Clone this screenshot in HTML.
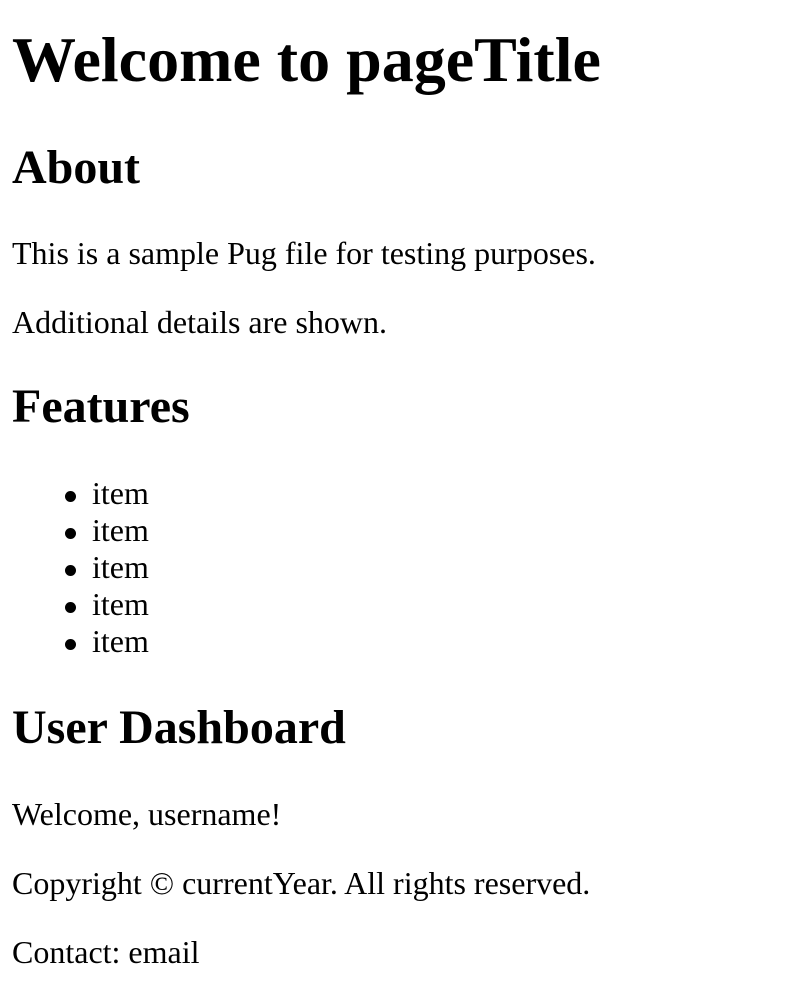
<!DOCTYPE html>
<html><head><meta charset="utf-8"><style>
html,body{margin:0;padding:0;background:#fff;width:812px;height:1008px;overflow:hidden}
body{font-family:"Liberation Serif","Times New Roman",serif;color:#000;position:relative}
.a{position:absolute;left:12px;margin:0;white-space:nowrap;line-height:1}
.h1{font-size:64px;font-weight:bold}
.h2{font-size:48px;font-weight:bold}
.p{font-size:32px}
.li{left:92px}
.li::before{content:"";position:absolute;left:-27px;top:14px;width:11px;height:11px;border-radius:50%;background:#000}
</style></head><body>
<h1 class="a h1" style="top:28px">Welcome to pageTitle</h1>
<h2 class="a h2" style="top:144px">About</h2>
<p class="a p" style="top:237px">This is a sample Pug file for testing purposes.</p>
<p class="a p" style="top:306px">Additional details are shown.</p>
<h2 class="a h2" style="top:383px">Features</h2>
<div class="a p li" style="top:477px">item</div>
<div class="a p li" style="top:514px">item</div>
<div class="a p li" style="top:551px">item</div>
<div class="a p li" style="top:588px">item</div>
<div class="a p li" style="top:625px">item</div>
<h2 class="a h2" style="top:704px">User Dashboard</h2>
<p class="a p" style="top:798px">Welcome, username!</p>
<p class="a p" style="top:867px">Copyright © currentYear. All rights reserved.</p>
<p class="a p" style="top:936px">Contact: email</p>
</body></html>
